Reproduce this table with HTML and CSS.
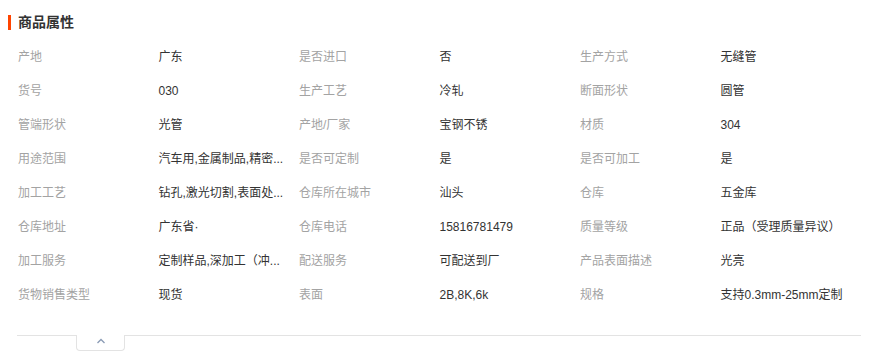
FILE: index.html
```html
<!DOCTYPE html>
<html lang="zh">
<head>
<meta charset="utf-8">
<link rel="stylesheet" href="styles.css">
</head>
<body>
<section class="attrs">
  <h2 class="title"><span class="bar"></span>商品属性</h2>
  <div class="grid">
    <div class="lbl">产地</div><div class="val">广东</div>
    <div class="lbl">是否进口</div><div class="val">否</div>
    <div class="lbl">生产方式</div><div class="val">无缝管</div>

    <div class="lbl">货号</div><div class="val">030</div>
    <div class="lbl">生产工艺</div><div class="val">冷轧</div>
    <div class="lbl">断面形状</div><div class="val">圆管</div>

    <div class="lbl">管端形状</div><div class="val">光管</div>
    <div class="lbl">产地/厂家</div><div class="val">宝钢不锈</div>
    <div class="lbl">材质</div><div class="val">304</div>

    <div class="lbl">用途范围</div><div class="val">汽车用,金属制品,精密...</div>
    <div class="lbl">是否可定制</div><div class="val">是</div>
    <div class="lbl">是否可加工</div><div class="val">是</div>

    <div class="lbl">加工工艺</div><div class="val">钻孔,激光切割,表面处...</div>
    <div class="lbl">仓库所在城市</div><div class="val">汕头</div>
    <div class="lbl">仓库</div><div class="val">五金库</div>

    <div class="lbl">仓库地址</div><div class="val">广东省·</div>
    <div class="lbl">仓库电话</div><div class="val">15816781479</div>
    <div class="lbl">质量等级</div><div class="val">正品（受理质量异议）</div>

    <div class="lbl">加工服务</div><div class="val">定制样品,深加工（冲...</div>
    <div class="lbl">配送服务</div><div class="val">可配送到厂</div>
    <div class="lbl">产品表面描述</div><div class="val">光亮</div>

    <div class="lbl">货物销售类型</div><div class="val">现货</div>
    <div class="lbl">表面</div><div class="val">2B,8K,6k</div>
    <div class="lbl">规格</div><div class="val">支持0.3mm-25mm定制</div>
  </div>
  <div class="fold">
    <button class="fold-tab" type="button" aria-label="收起">
      <svg width="10" height="6" viewBox="0 0 10 6"><polyline points="1.5,5 5,1.5 8.5,5" fill="none" stroke="#8a9bb5" stroke-width="1.3"/></svg>
    </button>
  </div>
</section>
</body>
</html>
```
FILE: styles.css
```css
* { box-sizing: border-box; }
body {
  margin: 0;
  background: #fff;
  font-family: "Liberation Sans", "Noto Sans CJK SC", sans-serif;
  color: #333;
}
.attrs {
  padding: 12px 0 0 8px;
}
.title {
  margin: 0;
  display: flex;
  align-items: center;
  gap: 7px;
  font-size: 14px;
  line-height: 20px;
  font-weight: bold;
  color: #333;
}
.bar {
  width: 3px;
  height: 15px;
  background: #ff4400;
}
.grid {
  margin: 8px 0 0 10px;
  width: 843px;
  display: grid;
  grid-template-columns: repeat(6, 1fr);
  grid-auto-rows: 34px;
  font-size: 12px;
}
.lbl, .val {
  line-height: 34px;
  white-space: nowrap;
}
.lbl { color: #a3a3a3; }
.val { color: #333; }
.fold {
  margin: 23px 0 0 9px;
  width: 844px;
  border-top: 1px solid #e3e3e3;
  padding-left: 59px;
}
.fold-tab {
  display: flex;
  justify-content: center;
  padding: 3px 0 0;
  width: 49px;
  height: 16px;
  margin-top: -1px;
  background: #fff;
  border: 1px solid #e3e3e3;
  border-top: none;
  border-radius: 0 0 4px 4px;
}
```
